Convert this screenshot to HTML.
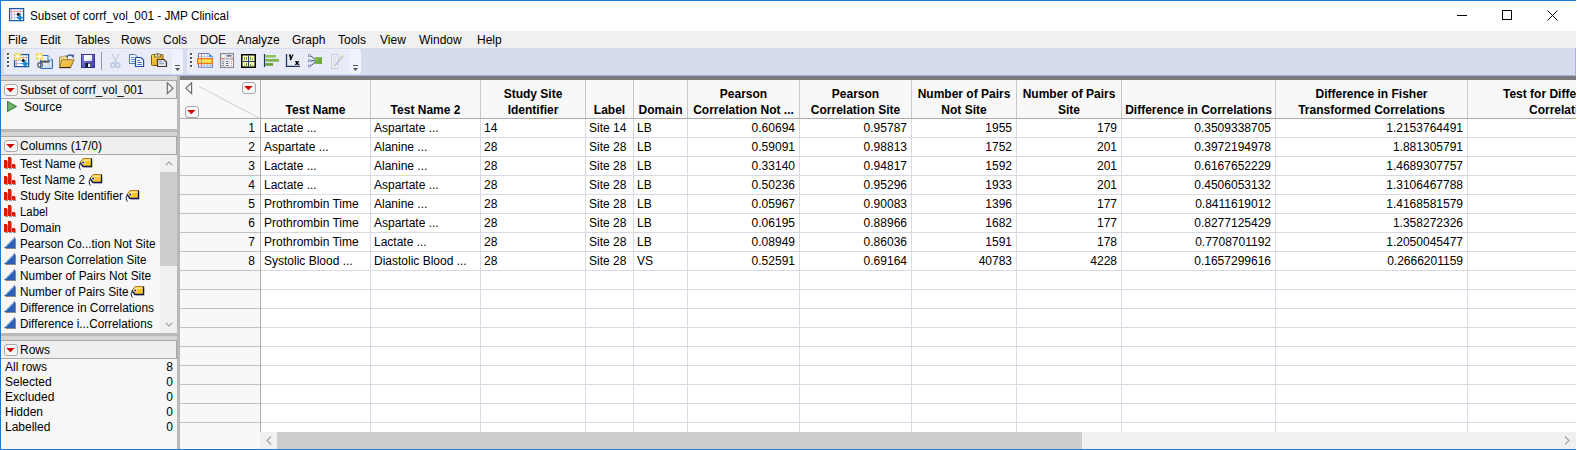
<!DOCTYPE html>
<html><head><meta charset="utf-8"><style>
html,body{margin:0;padding:0;}
body{width:1577px;height:450px;overflow:hidden;position:relative;background:#fff;font-family:"Liberation Sans",sans-serif;font-size:12px;}
body>div,body>svg{position:absolute;}
.t{line-height:14px;white-space:pre;color:#000;}
</style></head><body>
<div style="left:0px;top:0px;width:1576px;height:450px;background:#fff"></div>
<div style="left:1px;top:1px;width:1575px;height:30px;background:#fff"></div>
<div class="t" style="left:30px;top:9px;color:#000;transform:scaleX(0.978);transform-origin:0 0;">Subset of corrf_vol_001 - JMP Clinical</div>
<svg style="left:8px;top:7px" width="18" height="17" viewBox="8 7 18 17"><rect x="9.6" y="8.6" width="14" height="12" fill="#fff" stroke="#1e5aa6" stroke-width="1.3"/><path d="M14.5 9V20M17.5 9V20M20.5 9V20M10 14.5H23M10 17.5H23" stroke="#b8cfea" stroke-width="0.9"/><path d="M10 11.5H23M11.5 9V20" stroke="#f49090" stroke-width="0.9"/><circle cx="18.5" cy="14.3" r="1.6" fill="#111"/><path d="M15.2 17.6Q19.5 17.3 19.9 13.8Q20.3 17.3 25 17.6Q20.3 17.9 19.9 22.8Q19.5 17.9 15.2 17.6Z" fill="#1a86cc"/></svg>
<div style="left:1457px;top:15px;width:10px;height:1px;background:#000"></div>
<div style="left:1502px;top:10px;width:8px;height:8px;border:1px solid #000"></div>
<svg style="left:1547px;top:10px" width="11" height="11" viewBox="0 0 11 11"><path d="M0.5 0.5L10.5 10.5M10.5 0.5L0.5 10.5" stroke="#000" stroke-width="1"/></svg>
<div style="left:1px;top:31px;width:1575px;height:17px;background:#f0f0f0"></div>
<div class="t" style="left:8px;top:33px;color:#000">File</div>
<div class="t" style="left:40px;top:33px;color:#000">Edit</div>
<div class="t" style="left:75px;top:33px;color:#000">Tables</div>
<div class="t" style="left:121px;top:33px;color:#000">Rows</div>
<div class="t" style="left:163px;top:33px;color:#000">Cols</div>
<div class="t" style="left:200px;top:33px;color:#000">DOE</div>
<div class="t" style="left:237px;top:33px;color:#000">Analyze</div>
<div class="t" style="left:292px;top:33px;color:#000">Graph</div>
<div class="t" style="left:338px;top:33px;color:#000">Tools</div>
<div class="t" style="left:380px;top:33px;color:#000">View</div>
<div class="t" style="left:419px;top:33px;color:#000">Window</div>
<div class="t" style="left:477px;top:33px;color:#000">Help</div>
<div style="left:1px;top:48px;width:1575px;height:27px;background:#d6dbee"></div>
<div style="left:1px;top:75px;width:1575px;height:1px;background:#a9b1d6"></div>
<div style="left:1575px;top:48px;width:1px;height:28px;background:#a9b1d6"></div>
<div style="left:4px;top:49px;width:179px;height:25px;background:#e9ecf7;border-radius:3px"></div>
<div style="left:172px;top:49px;width:11px;height:25px;background:#f0f3fb;border-radius:0 3px 3px 0"></div>
<div style="left:187px;top:49px;width:174px;height:25px;background:#e9ecf7;border-radius:3px"></div>
<div style="left:350px;top:49px;width:11px;height:25px;background:#f0f3fb;border-radius:0 3px 3px 0"></div>
<div style="left:8px;top:54px;width:2px;height:2px;background:#fff"></div>
<div style="left:7px;top:53px;width:2px;height:2px;background:#555"></div>
<div style="left:8px;top:58px;width:2px;height:2px;background:#fff"></div>
<div style="left:7px;top:57px;width:2px;height:2px;background:#555"></div>
<div style="left:8px;top:62px;width:2px;height:2px;background:#fff"></div>
<div style="left:7px;top:61px;width:2px;height:2px;background:#555"></div>
<div style="left:8px;top:66px;width:2px;height:2px;background:#fff"></div>
<div style="left:7px;top:65px;width:2px;height:2px;background:#555"></div>
<div style="left:191px;top:54px;width:2px;height:2px;background:#fff"></div>
<div style="left:190px;top:53px;width:2px;height:2px;background:#555"></div>
<div style="left:191px;top:58px;width:2px;height:2px;background:#fff"></div>
<div style="left:190px;top:57px;width:2px;height:2px;background:#555"></div>
<div style="left:191px;top:62px;width:2px;height:2px;background:#fff"></div>
<div style="left:190px;top:61px;width:2px;height:2px;background:#555"></div>
<div style="left:191px;top:66px;width:2px;height:2px;background:#fff"></div>
<div style="left:190px;top:65px;width:2px;height:2px;background:#555"></div>
<div style="left:175px;top:65px;width:5px;height:1px;background:#555"></div>
<svg style="left:175px;top:68px" width="5" height="3" viewBox="0 0 5 3"><path d="M0 0H5L2.5 3Z" fill="#555"/></svg>
<div style="left:353px;top:65px;width:5px;height:1px;background:#555"></div>
<svg style="left:353px;top:68px" width="5" height="3" viewBox="0 0 5 3"><path d="M0 0H5L2.5 3Z" fill="#555"/></svg>
<div style="left:101px;top:52px;width:1px;height:18px;background:#8f97b6"></div>
<svg style="left:13px;top:52px" width="19" height="18" viewBox="13 52 19 18"><rect x="14.6" y="54.6" width="14" height="12" fill="#fff" stroke="#1e5aa6" stroke-width="1.3"/><path d="M23.5 55V66M26.5 55V66M15 60.5H28" stroke="#b4cde8" stroke-width="0.9"/><path d="M21 57.5H28M16.5 60V66" stroke="#f08a8a" stroke-width="0.8"/><path d="M15 63.5H22" stroke="#8aa8d8" stroke-width="0.8"/><circle cx="23.3" cy="60.5" r="1.6" fill="#111"/><path d="M20.5 63.5Q24.6 63.2 25 60Q25.4 63.2 30.5 63.5Q25.4 63.8 25 68.5Q24.6 63.8 20.5 63.5Z" fill="#1a86cc"/><rect x="14" y="53" width="7" height="7" fill="#f3d45a"/><path d="M17.5 53V60M14 56.5H21M14.5 53.5L20.5 59.5M20.5 53.5L14.5 59.5" stroke="#fff6c8" stroke-width="0.9"/><circle cx="17.5" cy="56.5" r="1.4" fill="#fffef0"/></svg>
<svg style="left:35px;top:52px" width="19" height="18" viewBox="35 52 19 18"><defs><linearGradient id="gpg" x1="0" y1="0" x2="1" y2="1"><stop offset="0" stop-color="#ffffff"/><stop offset="1" stop-color="#bcd4f0"/></linearGradient></defs><path d="M40.5 55.5H48L52.5 60V68.5H40.5Z" fill="url(#gpg)" stroke="#2a6cb8" stroke-width="1"/><path d="M48 55.5V60H52.5" fill="#fff" stroke="#2a6cb8" stroke-width="0.9"/><circle cx="40" cy="65" r="2.3" fill="none" stroke="#6a6a6a" stroke-width="1.4"/><path d="M41 61.6H49.5" stroke="#4e4e4e" stroke-width="2"/><rect x="36" y="53" width="7" height="7" fill="#f3d45a"/><path d="M39.5 53V60M36 56.5H43M36.5 53.5L42.5 59.5M42.5 53.5L36.5 59.5" stroke="#fff6c8" stroke-width="0.9"/><circle cx="39.5" cy="56.5" r="1.4" fill="#fffef0"/></svg>
<svg style="left:58px;top:52px" width="18" height="17" viewBox="58 52 18 17"><defs><linearGradient id="gf1" x1="0" y1="0" x2="0" y2="1"><stop offset="0" stop-color="#f8e8a0"/><stop offset="1" stop-color="#e0bc60"/></linearGradient><linearGradient id="gf2" x1="0" y1="0" x2="1" y2="1"><stop offset="0" stop-color="#f8dc70"/><stop offset="1" stop-color="#e8a418"/></linearGradient></defs><path d="M59.5 57H62.5L63.5 56H67.5V67.5H59.5Z" fill="url(#gf1)" stroke="#a08848" stroke-width="0.9"/><path d="M61.8 59.8H74.2L70.6 67.6H59.6Z" fill="url(#gf2)" stroke="#8a6a28" stroke-width="0.9"/><path d="M59.5 67.6H70.6" stroke="#2a2010" stroke-width="1"/><path d="M66.3 57.2Q68.8 53.6 72.4 55.8" fill="none" stroke="#3c5c8c" stroke-width="1.3"/><path d="M70.6 55L74.2 54.6L73.6 58.2Z" fill="#3c5c8c"/></svg>
<svg style="left:80px;top:53px" width="16" height="16" viewBox="80 53 16 16"><defs><linearGradient id="gsv" x1="0" y1="0" x2="1" y2="1"><stop offset="0" stop-color="#8484e4"/><stop offset="1" stop-color="#3c3ca8"/></linearGradient><linearGradient id="glb" x1="0" y1="0" x2="1" y2="1"><stop offset="0" stop-color="#ffffff"/><stop offset="0.6" stop-color="#f4f6ff"/><stop offset="1" stop-color="#c8d0ec"/></linearGradient></defs><rect x="81.5" y="54.5" width="13" height="13" fill="url(#gsv)" stroke="#34349a" stroke-width="1"/><rect x="84" y="55" width="8" height="6" fill="url(#glb)"/><rect x="85.5" y="63" width="5.5" height="4.5" fill="#141414"/><rect x="88" y="63.6" width="2.4" height="3.4" fill="#e8e8e8"/></svg>
<svg style="left:109px;top:53px" width="12" height="16" viewBox="109 53 12 16"><path d="M112.2 54L116.6 63M118.8 54L114.4 63" stroke="#c6d0e2" stroke-width="1.6"/><ellipse cx="112.8" cy="65.2" rx="1.9" ry="2.2" fill="none" stroke="#b6c6e4" stroke-width="1.4"/><ellipse cx="117.9" cy="65.2" rx="1.9" ry="2.2" fill="none" stroke="#b6c6e4" stroke-width="1.4"/></svg>
<svg style="left:128px;top:53px" width="17" height="15" viewBox="128 53 17 15"><path d="M129.5 54.5H135L137.5 57V63.5H129.5Z" fill="#f6f9ff" stroke="#5274b0" stroke-width="1"/><path d="M131 57.5H134M131 59.5H135.5M131 61.5H135.5" stroke="#5a8ad6" stroke-width="0.9"/><path d="M135.5 57.5H141L143.6 60.2V66.5H135.5Z" fill="#f8fbff" stroke="#2448a4" stroke-width="1.2"/><path d="M137.2 60.5H140M137.2 62.5H142M137.2 64.5H142" stroke="#4a7ad4" stroke-width="1"/></svg>
<svg style="left:150px;top:52px" width="18" height="16" viewBox="150 52 18 16"><defs><linearGradient id="gcb" x1="0" y1="0" x2="1" y2="1"><stop offset="0" stop-color="#f8dc58"/><stop offset="1" stop-color="#d89a10"/></linearGradient></defs><rect x="151.5" y="54.5" width="11.5" height="11" rx="1" fill="url(#gcb)" stroke="#7a5a20" stroke-width="1"/><path d="M154.6 57V54.6Q157.6 52.4 160.6 54.6V57Z" fill="#efe6bc" stroke="#6e5e38" stroke-width="0.9"/><circle cx="157.6" cy="55.1" r="0.8" fill="#6e5e38"/><path d="M157.5 59.5H164L166.5 62V66.5H157.5Z" fill="#dde4ef" stroke="#4a3828" stroke-width="1.2"/><path d="M159.2 61.6H162M159.2 63.6H164" stroke="#8898b8" stroke-width="1"/></svg>
<svg style="left:196px;top:52px" width="18" height="17" viewBox="196 52 18 17"><path d="M198.5 53.5H209L212.5 57V67.5H198.5Z" fill="#f6f9fd" stroke="#7078b8" stroke-width="1"/><path d="M209 53.5L212.5 57H209Z" fill="#3a8ad8"/><path d="M204.5 54V67M207.5 54V67M210.5 57V67M199 56.5H209M199 65.5H212M199 67H212" stroke="#a8cce8" stroke-width="0.9"/><rect x="197.7" y="58.7" width="14.6" height="4.8" fill="#f2ee5a" stroke="#f07818" stroke-width="1.4"/><path d="M204.5 59.5V63M207.5 59.5V63M210.5 59.5V63" stroke="#e4d848" stroke-width="0.8"/><path d="M201.5 54V67" stroke="#f06464" stroke-width="0.9"/></svg>
<svg style="left:219px;top:52px" width="16" height="17" viewBox="219 52 16 17"><rect x="220.6" y="53.6" width="12.8" height="13.8" fill="#d6d6d6" stroke="#8c8c8c" stroke-width="1.3"/><rect x="221.5" y="54.5" width="3" height="3" fill="#fafafa"/><rect x="225.5" y="54.5" width="7" height="3" fill="#fafafa"/><path d="M226.6 55.9H231.6" stroke="#283868" stroke-width="1.2"/><path d="M221 58.6H224.5" stroke="#e88a8a" stroke-width="1.2"/><path d="M225.5 58.6H229.5" stroke="#b0b8d8" stroke-width="1.2"/><path d="M230.3 58.6H233" stroke="#e88a8a" stroke-width="1.2"/><rect x="221.5" y="60" width="3" height="6.8" fill="#fafafa"/><rect x="225.4" y="60" width="3.8" height="6.8" fill="#fafafa"/><rect x="230" y="60" width="2.8" height="6.8" fill="#fafafa"/><circle cx="223" cy="61.5" r="0.7" fill="#283868"/><circle cx="223" cy="63.5" r="0.7" fill="#283868"/><circle cx="223" cy="65.5" r="0.7" fill="#283868"/><path d="M226.3 61.5H228.3M226.3 63.5H228.3M226.3 65.5H228.3" stroke="#2a4a6a" stroke-width="1"/><circle cx="231.4" cy="61.5" r="0.6" fill="#e06060"/><circle cx="231.4" cy="63.5" r="0.6" fill="#e06060"/><circle cx="231.4" cy="65.5" r="0.6" fill="#e06060"/></svg>
<svg style="left:240px;top:53px" width="17" height="16" viewBox="240 53 17 16"><rect x="241.75" y="54.75" width="13.5" height="12.5" fill="#f8f6b4" stroke="#050505" stroke-width="1.5"/><path d="M248.5 55.5V67M242.5 61.5H255" stroke="#26406a" stroke-width="1"/><path d="M244.5 57V60M246.5 57V60M250.5 57V60M252.5 58.5V60M244.5 65V66M246.5 63V66M250.5 64V66M252.5 65V66" stroke="#6a9a30" stroke-width="1"/></svg>
<svg style="left:263px;top:53px" width="17" height="15" viewBox="263 53 17 15"><path d="M264.5 54V67" stroke="#1e3468" stroke-width="1.2"/><rect x="265.2" y="55" width="10.8" height="2.6" fill="#8cc45c"/><rect x="265.2" y="59" width="13.8" height="2.7" fill="#7ab44a"/><rect x="265.2" y="63.1" width="7.8" height="2.7" fill="#66a03a"/></svg>
<svg style="left:285px;top:53px" width="16" height="15" viewBox="285 53 16 15"><path d="M286.5 54V66.4H300" fill="none" stroke="#1e3468" stroke-width="1.3"/><path d="M288.8 54.6H290.8L291.4 57.2L292.2 54.6H293.6L291.2 60.2H289.4L290.2 59L288.8 54.6Z" fill="#000"/><path d="M294.8 61H296.8L297.2 62.2L297.8 61H299.4L298.1 62.9L299.6 65H297.6L297.1 63.8L296.4 65H294.8L296.2 62.9Z" fill="#000"/></svg>
<svg style="left:307px;top:53px" width="16" height="15" viewBox="307 53 16 15"><rect x="308.5" y="54.6" width="2" height="2" fill="#eef" stroke="#8090c0" stroke-width="0.8"/><rect x="308.5" y="59.8" width="2" height="2" fill="#eef" stroke="#8090c0" stroke-width="0.8"/><rect x="308.5" y="65" width="2" height="2" fill="#eef" stroke="#8090c0" stroke-width="0.8"/><path d="M311 56L315 59.2M311 60.8H315M311 65.6L315 62.4" stroke="#1e3468" stroke-width="0.9"/><defs><linearGradient id="gft" x1="0" y1="0" x2="1" y2="1"><stop offset="0" stop-color="#84c050"/><stop offset="1" stop-color="#5e9e34"/></linearGradient></defs><rect x="315" y="57.1" width="7" height="6.8" fill="url(#gft)"/></svg>
<svg style="left:330px;top:53px" width="16" height="17" viewBox="330 53 16 17"><rect x="331.5" y="54.5" width="6.5" height="14" fill="#eef1f6" stroke="#c8d0de" stroke-width="1"/><path d="M333 57H336M333 59H336M333 61H336M333 63H335" stroke="#c4ccd8" stroke-width="0.8"/><path d="M333.8 66.6L342.6 56.4" stroke="#c6ccda" stroke-width="2.2"/><path d="M342.2 56.8L343.8 55" stroke="#f0dab0" stroke-width="2.2"/><path d="M333.6 66.8L334.8 65.4" stroke="#f0dab0" stroke-width="1.6"/></svg>
<div style="left:1px;top:76px;width:176px;height:4px;background:#d5d5d5"></div>
<div style="left:177px;top:76px;width:3px;height:4px;background:#b9b9b9"></div>
<div style="left:180px;top:76px;width:1396px;height:4px;background:#7b7b7b"></div>
<div style="left:1px;top:80px;width:176px;height:369px;background:#f7f7f7"></div>
<div style="left:177px;top:80px;width:3px;height:369px;background:#b9b9b9"></div>
<div style="left:1px;top:80px;width:176px;height:19px;background:#efefef;border-top:1px solid #a8a8a8;border-bottom:1px solid #a8a8a8;border-right:1px solid #a8a8a8;box-sizing:border-box"></div>
<div style="left:4px;top:84px;width:13px;height:11px;background:#f7f7f7;border:1px solid #a8a8a8;border-radius:3px;box-sizing:border-box;width:14px;height:12px"></div>
<svg style="left:6px;top:88px" width="9" height="5" viewBox="0 0 9 5"><path d="M0.2 0H8.6L4.4 4.3Z" fill="#d00000"/></svg>
<div class="t" style="left:20px;top:83px;color:#000;transform:scaleX(0.972);transform-origin:0 0;">Subset of corrf_vol_001</div>
<svg style="left:166px;top:82px" width="8" height="13" viewBox="0 0 8 13"><path d="M1.3 0.7V11.6L7 6.15Z" fill="none" stroke="#6e6e6e" stroke-width="1.2"/></svg>
<svg style="left:7px;top:101px" width="10" height="11" viewBox="0 0 10 11"><path d="M0.6 0.6V10.4L9.2 5.5Z" fill="#72b672" stroke="#3a843a" stroke-width="1.1"/></svg>
<div class="t" style="left:24px;top:100px;color:#000">Source</div>
<div style="left:1px;top:129px;width:176px;height:3px;background:#b9b9b9"></div>
<div style="left:1px;top:132px;width:176px;height:4px;background:#d5d5d5"></div>
<div style="left:1px;top:136px;width:176px;height:19px;background:#efefef;border-top:1px solid #a8a8a8;border-bottom:1px solid #a8a8a8;border-right:1px solid #a8a8a8;box-sizing:border-box"></div>
<div style="left:4px;top:140px;width:13px;height:11px;background:#f7f7f7;border:1px solid #a8a8a8;border-radius:3px;box-sizing:border-box;width:14px;height:12px"></div>
<svg style="left:6px;top:144px" width="9" height="5" viewBox="0 0 9 5"><path d="M0.2 0H8.6L4.4 4.3Z" fill="#d00000"/></svg>
<div class="t" style="left:20px;top:139px;color:#000">Columns (17/0)</div>
<svg style="left:4px;top:157px" width="13" height="13" viewBox="0 0 13 13"><rect x="1" y="4" width="3" height="8" fill="#999"/><rect x="5" y="1" width="3" height="11" fill="#999"/><rect x="9" y="8" width="3" height="4" fill="#999"/><rect x="0" y="3" width="3" height="8" fill="#d61f06"/><rect x="4" y="0" width="3" height="11" fill="#d61f06"/><rect x="8" y="7" width="3" height="4" fill="#d61f06"/></svg>
<div class="t" style="left:20px;top:157px;color:#000;transform:scaleX(0.973);transform-origin:0 0;">Test Name</div>
<svg style="left:78px;top:156px" width="15" height="14" viewBox="0 0 15 14"><path d="M6 3.5H14.5V11.5H6Z" fill="#9a9a9a" opacity="0.6"/><path d="M5 2.5H13.5V10.5H5L2 6.5Z" fill="#f7c624"/><path d="M5.5 3.5H13V5H5Z" fill="#fde58a"/><path d="M2 6.5L5 2.5H13.5" fill="none" stroke="#b07a30" stroke-width="1"/><path d="M13.5 2.5V10.5H5L2 6.5" fill="none" stroke="#0e1650" stroke-width="1.3"/><circle cx="5.2" cy="6.5" r="1.7" fill="#fff"/><circle cx="5.2" cy="6.5" r="1" fill="#0e1650"/><path d="M2.5 7Q0.2 9 1.6 12.5L2.8 13.5" fill="none" stroke="#0e1650" stroke-width="1"/></svg>
<svg style="left:4px;top:173px" width="13" height="13" viewBox="0 0 13 13"><rect x="1" y="4" width="3" height="8" fill="#999"/><rect x="5" y="1" width="3" height="11" fill="#999"/><rect x="9" y="8" width="3" height="4" fill="#999"/><rect x="0" y="3" width="3" height="8" fill="#d61f06"/><rect x="4" y="0" width="3" height="11" fill="#d61f06"/><rect x="8" y="7" width="3" height="4" fill="#d61f06"/></svg>
<div class="t" style="left:20px;top:173px;color:#000;transform:scaleX(0.962);transform-origin:0 0;">Test Name 2</div>
<svg style="left:88px;top:172px" width="15" height="14" viewBox="0 0 15 14"><path d="M6 3.5H14.5V11.5H6Z" fill="#9a9a9a" opacity="0.6"/><path d="M5 2.5H13.5V10.5H5L2 6.5Z" fill="#f7c624"/><path d="M5.5 3.5H13V5H5Z" fill="#fde58a"/><path d="M2 6.5L5 2.5H13.5" fill="none" stroke="#b07a30" stroke-width="1"/><path d="M13.5 2.5V10.5H5L2 6.5" fill="none" stroke="#0e1650" stroke-width="1.3"/><circle cx="5.2" cy="6.5" r="1.7" fill="#fff"/><circle cx="5.2" cy="6.5" r="1" fill="#0e1650"/><path d="M2.5 7Q0.2 9 1.6 12.5L2.8 13.5" fill="none" stroke="#0e1650" stroke-width="1"/></svg>
<svg style="left:4px;top:189px" width="13" height="13" viewBox="0 0 13 13"><rect x="1" y="4" width="3" height="8" fill="#999"/><rect x="5" y="1" width="3" height="11" fill="#999"/><rect x="9" y="8" width="3" height="4" fill="#999"/><rect x="0" y="3" width="3" height="8" fill="#d61f06"/><rect x="4" y="0" width="3" height="11" fill="#d61f06"/><rect x="8" y="7" width="3" height="4" fill="#d61f06"/></svg>
<div class="t" style="left:20px;top:189px;color:#000;transform:scaleX(0.99);transform-origin:0 0;">Study Site Identifier</div>
<svg style="left:125px;top:188px" width="15" height="14" viewBox="0 0 15 14"><path d="M6 3.5H14.5V11.5H6Z" fill="#9a9a9a" opacity="0.6"/><path d="M5 2.5H13.5V10.5H5L2 6.5Z" fill="#f7c624"/><path d="M5.5 3.5H13V5H5Z" fill="#fde58a"/><path d="M2 6.5L5 2.5H13.5" fill="none" stroke="#b07a30" stroke-width="1"/><path d="M13.5 2.5V10.5H5L2 6.5" fill="none" stroke="#0e1650" stroke-width="1.3"/><circle cx="5.2" cy="6.5" r="1.7" fill="#fff"/><circle cx="5.2" cy="6.5" r="1" fill="#0e1650"/><path d="M2.5 7Q0.2 9 1.6 12.5L2.8 13.5" fill="none" stroke="#0e1650" stroke-width="1"/></svg>
<svg style="left:4px;top:205px" width="13" height="13" viewBox="0 0 13 13"><rect x="1" y="4" width="3" height="8" fill="#999"/><rect x="5" y="1" width="3" height="11" fill="#999"/><rect x="9" y="8" width="3" height="4" fill="#999"/><rect x="0" y="3" width="3" height="8" fill="#d61f06"/><rect x="4" y="0" width="3" height="11" fill="#d61f06"/><rect x="8" y="7" width="3" height="4" fill="#d61f06"/></svg>
<div class="t" style="left:20px;top:205px;color:#000;transform:scaleX(0.946);transform-origin:0 0;">Label</div>
<svg style="left:4px;top:221px" width="13" height="13" viewBox="0 0 13 13"><rect x="1" y="4" width="3" height="8" fill="#999"/><rect x="5" y="1" width="3" height="11" fill="#999"/><rect x="9" y="8" width="3" height="4" fill="#999"/><rect x="0" y="3" width="3" height="8" fill="#d61f06"/><rect x="4" y="0" width="3" height="11" fill="#d61f06"/><rect x="8" y="7" width="3" height="4" fill="#d61f06"/></svg>
<div class="t" style="left:20px;top:221px;color:#000;transform:scaleX(0.99);transform-origin:0 0;">Domain</div>
<svg style="left:4px;top:237px" width="13" height="12" viewBox="0 0 13 12"><path d="M1 12L12 1V12Z" fill="#8a8a8a"/><path d="M0 11L11 0V11Z" fill="#2c5fb6"/><path d="M1.8 10.2L10.2 1.8" stroke="#6aa8f0" stroke-width="0.9"/></svg>
<div class="t" style="left:20px;top:237px;color:#000;transform:scaleX(0.976);transform-origin:0 0;">Pearson Co...tion Not Site</div>
<svg style="left:4px;top:253px" width="13" height="12" viewBox="0 0 13 12"><path d="M1 12L12 1V12Z" fill="#8a8a8a"/><path d="M0 11L11 0V11Z" fill="#2c5fb6"/><path d="M1.8 10.2L10.2 1.8" stroke="#6aa8f0" stroke-width="0.9"/></svg>
<div class="t" style="left:20px;top:253px;color:#000;transform:scaleX(0.967);transform-origin:0 0;">Pearson Correlation Site</div>
<svg style="left:4px;top:269px" width="13" height="12" viewBox="0 0 13 12"><path d="M1 12L12 1V12Z" fill="#8a8a8a"/><path d="M0 11L11 0V11Z" fill="#2c5fb6"/><path d="M1.8 10.2L10.2 1.8" stroke="#6aa8f0" stroke-width="0.9"/></svg>
<div class="t" style="left:20px;top:269px;color:#000;transform:scaleX(0.988);transform-origin:0 0;">Number of Pairs Not Site</div>
<svg style="left:4px;top:285px" width="13" height="12" viewBox="0 0 13 12"><path d="M1 12L12 1V12Z" fill="#8a8a8a"/><path d="M0 11L11 0V11Z" fill="#2c5fb6"/><path d="M1.8 10.2L10.2 1.8" stroke="#6aa8f0" stroke-width="0.9"/></svg>
<div class="t" style="left:20px;top:285px;color:#000;transform:scaleX(0.98);transform-origin:0 0;">Number of Pairs Site</div>
<svg style="left:130px;top:284px" width="15" height="14" viewBox="0 0 15 14"><path d="M6 3.5H14.5V11.5H6Z" fill="#9a9a9a" opacity="0.6"/><path d="M5 2.5H13.5V10.5H5L2 6.5Z" fill="#f7c624"/><path d="M5.5 3.5H13V5H5Z" fill="#fde58a"/><path d="M2 6.5L5 2.5H13.5" fill="none" stroke="#b07a30" stroke-width="1"/><path d="M13.5 2.5V10.5H5L2 6.5" fill="none" stroke="#0e1650" stroke-width="1.3"/><circle cx="5.2" cy="6.5" r="1.7" fill="#fff"/><circle cx="5.2" cy="6.5" r="1" fill="#0e1650"/><path d="M2.5 7Q0.2 9 1.6 12.5L2.8 13.5" fill="none" stroke="#0e1650" stroke-width="1"/></svg>
<svg style="left:4px;top:301px" width="13" height="12" viewBox="0 0 13 12"><path d="M1 12L12 1V12Z" fill="#8a8a8a"/><path d="M0 11L11 0V11Z" fill="#2c5fb6"/><path d="M1.8 10.2L10.2 1.8" stroke="#6aa8f0" stroke-width="0.9"/></svg>
<div class="t" style="left:20px;top:301px;color:#000;transform:scaleX(0.991);transform-origin:0 0;">Difference in Correlations</div>
<svg style="left:4px;top:317px" width="13" height="12" viewBox="0 0 13 12"><path d="M1 12L12 1V12Z" fill="#8a8a8a"/><path d="M0 11L11 0V11Z" fill="#2c5fb6"/><path d="M1.8 10.2L10.2 1.8" stroke="#6aa8f0" stroke-width="0.9"/></svg>
<div class="t" style="left:20px;top:317px;color:#000;transform:scaleX(0.981);transform-origin:0 0;">Difference i...Correlations</div>
<div style="left:160px;top:155px;width:17px;height:178px;background:#f0f0f0"></div>
<div style="left:160px;top:172px;width:17px;height:94px;background:#cdcdcd"></div>
<svg style="left:165px;top:160px" width="9" height="7" viewBox="0 0 9 7"><path d="M0.8 5.3L4 1.8L7.2 5.3" fill="none" stroke="#a0a0a0" stroke-width="1.1"/></svg>
<svg style="left:165px;top:321px" width="9" height="7" viewBox="0 0 9 7"><path d="M0.8 1.7L4 5.2L7.2 1.7" fill="none" stroke="#a0a0a0" stroke-width="1.1"/></svg>
<div style="left:1px;top:333px;width:176px;height:3px;background:#b9b9b9"></div>
<div style="left:1px;top:336px;width:176px;height:4px;background:#d5d5d5"></div>
<div style="left:1px;top:340px;width:176px;height:19px;background:#efefef;border-top:1px solid #a8a8a8;border-bottom:1px solid #a8a8a8;border-right:1px solid #a8a8a8;box-sizing:border-box"></div>
<div style="left:4px;top:344px;width:13px;height:11px;background:#f7f7f7;border:1px solid #a8a8a8;border-radius:3px;box-sizing:border-box;width:14px;height:12px"></div>
<svg style="left:6px;top:348px" width="9" height="5" viewBox="0 0 9 5"><path d="M0.2 0H8.6L4.4 4.3Z" fill="#d00000"/></svg>
<div class="t" style="left:20px;top:343px;color:#000">Rows</div>
<div class="t" style="left:5px;top:360px;color:#000">All rows</div>
<div class="t" style="right:1404px;top:360px;text-align:right;color:#000">8</div>
<div class="t" style="left:5px;top:375px;color:#000">Selected</div>
<div class="t" style="right:1404px;top:375px;text-align:right;color:#000">0</div>
<div class="t" style="left:5px;top:390px;color:#000">Excluded</div>
<div class="t" style="right:1404px;top:390px;text-align:right;color:#000">0</div>
<div class="t" style="left:5px;top:405px;color:#000">Hidden</div>
<div class="t" style="right:1404px;top:405px;text-align:right;color:#000">0</div>
<div class="t" style="left:5px;top:420px;color:#000">Labelled</div>
<div class="t" style="right:1404px;top:420px;text-align:right;color:#000">0</div>
<div style="left:180px;top:80px;width:1396px;height:369px;background:#f8f8f8"></div>
<div style="left:261px;top:119px;width:1315px;height:313px;background:#fff"></div>
<div style="left:180px;top:118px;width:1396px;height:1px;background:#ababab"></div>
<div style="left:180px;top:137px;width:80px;height:1px;background:#c2c2c2"></div>
<div style="left:261px;top:137px;width:1315px;height:1px;background:#d9d9e3"></div>
<div style="left:180px;top:156px;width:80px;height:1px;background:#c2c2c2"></div>
<div style="left:261px;top:156px;width:1315px;height:1px;background:#d9d9e3"></div>
<div style="left:180px;top:175px;width:80px;height:1px;background:#c2c2c2"></div>
<div style="left:261px;top:175px;width:1315px;height:1px;background:#d9d9e3"></div>
<div style="left:180px;top:194px;width:80px;height:1px;background:#c2c2c2"></div>
<div style="left:261px;top:194px;width:1315px;height:1px;background:#d9d9e3"></div>
<div style="left:180px;top:213px;width:80px;height:1px;background:#c2c2c2"></div>
<div style="left:261px;top:213px;width:1315px;height:1px;background:#d9d9e3"></div>
<div style="left:180px;top:232px;width:80px;height:1px;background:#c2c2c2"></div>
<div style="left:261px;top:232px;width:1315px;height:1px;background:#d9d9e3"></div>
<div style="left:180px;top:251px;width:80px;height:1px;background:#c2c2c2"></div>
<div style="left:261px;top:251px;width:1315px;height:1px;background:#d9d9e3"></div>
<div style="left:180px;top:270px;width:80px;height:1px;background:#c2c2c2"></div>
<div style="left:261px;top:270px;width:1315px;height:1px;background:#d9d9e3"></div>
<div style="left:180px;top:289px;width:80px;height:1px;background:#c2c2c2"></div>
<div style="left:261px;top:289px;width:1315px;height:1px;background:#d9d9e3"></div>
<div style="left:180px;top:308px;width:80px;height:1px;background:#c2c2c2"></div>
<div style="left:261px;top:308px;width:1315px;height:1px;background:#d9d9e3"></div>
<div style="left:180px;top:327px;width:80px;height:1px;background:#c2c2c2"></div>
<div style="left:261px;top:327px;width:1315px;height:1px;background:#d9d9e3"></div>
<div style="left:180px;top:346px;width:80px;height:1px;background:#c2c2c2"></div>
<div style="left:261px;top:346px;width:1315px;height:1px;background:#d9d9e3"></div>
<div style="left:180px;top:365px;width:80px;height:1px;background:#c2c2c2"></div>
<div style="left:261px;top:365px;width:1315px;height:1px;background:#d9d9e3"></div>
<div style="left:180px;top:384px;width:80px;height:1px;background:#c2c2c2"></div>
<div style="left:261px;top:384px;width:1315px;height:1px;background:#d9d9e3"></div>
<div style="left:180px;top:403px;width:80px;height:1px;background:#c2c2c2"></div>
<div style="left:261px;top:403px;width:1315px;height:1px;background:#d9d9e3"></div>
<div style="left:180px;top:422px;width:80px;height:1px;background:#c2c2c2"></div>
<div style="left:261px;top:422px;width:1315px;height:1px;background:#d9d9e3"></div>
<div style="left:260px;top:80px;width:1px;height:352px;background:#b0b0b0"></div>
<div style="left:370px;top:80px;width:1px;height:38px;background:#c8c8c8"></div>
<div style="left:370px;top:119px;width:1px;height:313px;background:#d9d9e3"></div>
<div style="left:480px;top:80px;width:1px;height:38px;background:#c8c8c8"></div>
<div style="left:480px;top:119px;width:1px;height:313px;background:#d9d9e3"></div>
<div style="left:585px;top:80px;width:1px;height:38px;background:#c8c8c8"></div>
<div style="left:585px;top:119px;width:1px;height:313px;background:#d9d9e3"></div>
<div style="left:633px;top:80px;width:1px;height:38px;background:#c8c8c8"></div>
<div style="left:633px;top:119px;width:1px;height:313px;background:#d9d9e3"></div>
<div style="left:687px;top:80px;width:1px;height:38px;background:#c8c8c8"></div>
<div style="left:687px;top:119px;width:1px;height:313px;background:#d9d9e3"></div>
<div style="left:799px;top:80px;width:1px;height:38px;background:#c8c8c8"></div>
<div style="left:799px;top:119px;width:1px;height:313px;background:#d9d9e3"></div>
<div style="left:911px;top:80px;width:1px;height:38px;background:#c8c8c8"></div>
<div style="left:911px;top:119px;width:1px;height:313px;background:#d9d9e3"></div>
<div style="left:1016px;top:80px;width:1px;height:38px;background:#c8c8c8"></div>
<div style="left:1016px;top:119px;width:1px;height:313px;background:#d9d9e3"></div>
<div style="left:1121px;top:80px;width:1px;height:38px;background:#c8c8c8"></div>
<div style="left:1121px;top:119px;width:1px;height:313px;background:#d9d9e3"></div>
<div style="left:1275px;top:80px;width:1px;height:38px;background:#c8c8c8"></div>
<div style="left:1275px;top:119px;width:1px;height:313px;background:#d9d9e3"></div>
<div style="left:1467px;top:80px;width:1px;height:38px;background:#c8c8c8"></div>
<div style="left:1467px;top:119px;width:1px;height:313px;background:#d9d9e3"></div>
<svg style="left:185px;top:82px" width="8" height="13" viewBox="0 0 8 13"><path d="M6.6 0.7V11.6L0.9 6.15Z" fill="none" stroke="#6e6e6e" stroke-width="1.2"/></svg>
<svg style="left:199px;top:86px" width="62" height="33" viewBox="0 0 62 33"><path d="M0 0.5L61 32.5" stroke="#cdcddc" stroke-width="1"/></svg>
<div style="left:242px;top:82px;width:13px;height:11px;background:#f7f7f7;border:1px solid #a8a8a8;border-radius:3px;box-sizing:border-box;width:14px;height:12px"></div>
<svg style="left:244px;top:86px" width="9" height="5" viewBox="0 0 9 5"><path d="M0.2 0H8.6L4.4 4.3Z" fill="#d00000"/></svg>
<div style="left:185px;top:106px;width:13px;height:11px;background:#f7f7f7;border:1px solid #a8a8a8;border-radius:3px;box-sizing:border-box;width:14px;height:12px"></div>
<svg style="left:187px;top:110px" width="9" height="5" viewBox="0 0 9 5"><path d="M0.2 0H8.6L4.4 4.3Z" fill="#d00000"/></svg>
<div class="t" style="left:115.5px;width:400px;top:103px;text-align:center;font-weight:bold;color:#000">Test Name</div>
<div class="t" style="left:225.5px;width:400px;top:103px;text-align:center;font-weight:bold;color:#000">Test Name 2</div>
<div class="t" style="left:333.0px;width:400px;top:87px;text-align:center;font-weight:bold;color:#000">Study Site</div>
<div class="t" style="left:333.0px;width:400px;top:103px;text-align:center;font-weight:bold;color:#000">Identifier</div>
<div class="t" style="left:409.5px;width:400px;top:103px;text-align:center;font-weight:bold;color:#000">Label</div>
<div class="t" style="left:460.5px;width:400px;top:103px;text-align:center;font-weight:bold;color:#000">Domain</div>
<div class="t" style="left:543.5px;width:400px;top:87px;text-align:center;font-weight:bold;color:#000">Pearson</div>
<div class="t" style="left:543.5px;width:400px;top:103px;text-align:center;font-weight:bold;color:#000">Correlation Not ...</div>
<div class="t" style="left:655.5px;width:400px;top:87px;text-align:center;font-weight:bold;color:#000">Pearson</div>
<div class="t" style="left:655.5px;width:400px;top:103px;text-align:center;font-weight:bold;color:#000">Correlation Site</div>
<div class="t" style="left:764.0px;width:400px;top:87px;text-align:center;font-weight:bold;color:#000">Number of Pairs</div>
<div class="t" style="left:764.0px;width:400px;top:103px;text-align:center;font-weight:bold;color:#000">Not Site</div>
<div class="t" style="left:869.0px;width:400px;top:87px;text-align:center;font-weight:bold;color:#000">Number of Pairs</div>
<div class="t" style="left:869.0px;width:400px;top:103px;text-align:center;font-weight:bold;color:#000">Site</div>
<div class="t" style="left:998.5px;width:400px;top:103px;text-align:center;font-weight:bold;color:#000">Difference in Correlations</div>
<div class="t" style="left:1171.5px;width:400px;top:87px;text-align:center;font-weight:bold;color:#000">Difference in Fisher</div>
<div class="t" style="left:1171.5px;width:400px;top:103px;text-align:center;font-weight:bold;color:#000">Transformed Correlations</div>
<div class="t" style="left:1503px;top:87px;font-weight:bold;color:#000">Test for Difference in</div>
<div class="t" style="left:1529px;top:103px;font-weight:bold;color:#000">Correlations</div>
<div class="t" style="right:1322px;top:121px;text-align:right;color:#000">1</div>
<div class="t" style="left:264px;top:121px;color:#000">Lactate ...</div>
<div class="t" style="left:374px;top:121px;color:#000">Aspartate ...</div>
<div class="t" style="left:484px;top:121px;color:#000">14</div>
<div class="t" style="left:589px;top:121px;color:#000">Site 14</div>
<div class="t" style="left:637px;top:121px;color:#000">LB</div>
<div class="t" style="right:782px;top:121px;text-align:right;color:#000">0.60694</div>
<div class="t" style="right:670px;top:121px;text-align:right;color:#000">0.95787</div>
<div class="t" style="right:565px;top:121px;text-align:right;color:#000">1955</div>
<div class="t" style="right:460px;top:121px;text-align:right;color:#000">179</div>
<div class="t" style="right:306px;top:121px;text-align:right;color:#000">0.3509338705</div>
<div class="t" style="right:114px;top:121px;text-align:right;color:#000">1.2153764491</div>
<div class="t" style="right:1322px;top:140px;text-align:right;color:#000">2</div>
<div class="t" style="left:264px;top:140px;color:#000">Aspartate ...</div>
<div class="t" style="left:374px;top:140px;color:#000">Alanine ...</div>
<div class="t" style="left:484px;top:140px;color:#000">28</div>
<div class="t" style="left:589px;top:140px;color:#000">Site 28</div>
<div class="t" style="left:637px;top:140px;color:#000">LB</div>
<div class="t" style="right:782px;top:140px;text-align:right;color:#000">0.59091</div>
<div class="t" style="right:670px;top:140px;text-align:right;color:#000">0.98813</div>
<div class="t" style="right:565px;top:140px;text-align:right;color:#000">1752</div>
<div class="t" style="right:460px;top:140px;text-align:right;color:#000">201</div>
<div class="t" style="right:306px;top:140px;text-align:right;color:#000">0.3972194978</div>
<div class="t" style="right:114px;top:140px;text-align:right;color:#000">1.881305791</div>
<div class="t" style="right:1322px;top:159px;text-align:right;color:#000">3</div>
<div class="t" style="left:264px;top:159px;color:#000">Lactate ...</div>
<div class="t" style="left:374px;top:159px;color:#000">Alanine ...</div>
<div class="t" style="left:484px;top:159px;color:#000">28</div>
<div class="t" style="left:589px;top:159px;color:#000">Site 28</div>
<div class="t" style="left:637px;top:159px;color:#000">LB</div>
<div class="t" style="right:782px;top:159px;text-align:right;color:#000">0.33140</div>
<div class="t" style="right:670px;top:159px;text-align:right;color:#000">0.94817</div>
<div class="t" style="right:565px;top:159px;text-align:right;color:#000">1592</div>
<div class="t" style="right:460px;top:159px;text-align:right;color:#000">201</div>
<div class="t" style="right:306px;top:159px;text-align:right;color:#000">0.6167652229</div>
<div class="t" style="right:114px;top:159px;text-align:right;color:#000">1.4689307757</div>
<div class="t" style="right:1322px;top:178px;text-align:right;color:#000">4</div>
<div class="t" style="left:264px;top:178px;color:#000">Lactate ...</div>
<div class="t" style="left:374px;top:178px;color:#000">Aspartate ...</div>
<div class="t" style="left:484px;top:178px;color:#000">28</div>
<div class="t" style="left:589px;top:178px;color:#000">Site 28</div>
<div class="t" style="left:637px;top:178px;color:#000">LB</div>
<div class="t" style="right:782px;top:178px;text-align:right;color:#000">0.50236</div>
<div class="t" style="right:670px;top:178px;text-align:right;color:#000">0.95296</div>
<div class="t" style="right:565px;top:178px;text-align:right;color:#000">1933</div>
<div class="t" style="right:460px;top:178px;text-align:right;color:#000">201</div>
<div class="t" style="right:306px;top:178px;text-align:right;color:#000">0.4506053132</div>
<div class="t" style="right:114px;top:178px;text-align:right;color:#000">1.3106467788</div>
<div class="t" style="right:1322px;top:197px;text-align:right;color:#000">5</div>
<div class="t" style="left:264px;top:197px;color:#000">Prothrombin Time</div>
<div class="t" style="left:374px;top:197px;color:#000">Alanine ...</div>
<div class="t" style="left:484px;top:197px;color:#000">28</div>
<div class="t" style="left:589px;top:197px;color:#000">Site 28</div>
<div class="t" style="left:637px;top:197px;color:#000">LB</div>
<div class="t" style="right:782px;top:197px;text-align:right;color:#000">0.05967</div>
<div class="t" style="right:670px;top:197px;text-align:right;color:#000">0.90083</div>
<div class="t" style="right:565px;top:197px;text-align:right;color:#000">1396</div>
<div class="t" style="right:460px;top:197px;text-align:right;color:#000">177</div>
<div class="t" style="right:306px;top:197px;text-align:right;color:#000">0.8411619012</div>
<div class="t" style="right:114px;top:197px;text-align:right;color:#000">1.4168581579</div>
<div class="t" style="right:1322px;top:216px;text-align:right;color:#000">6</div>
<div class="t" style="left:264px;top:216px;color:#000">Prothrombin Time</div>
<div class="t" style="left:374px;top:216px;color:#000">Aspartate ...</div>
<div class="t" style="left:484px;top:216px;color:#000">28</div>
<div class="t" style="left:589px;top:216px;color:#000">Site 28</div>
<div class="t" style="left:637px;top:216px;color:#000">LB</div>
<div class="t" style="right:782px;top:216px;text-align:right;color:#000">0.06195</div>
<div class="t" style="right:670px;top:216px;text-align:right;color:#000">0.88966</div>
<div class="t" style="right:565px;top:216px;text-align:right;color:#000">1682</div>
<div class="t" style="right:460px;top:216px;text-align:right;color:#000">177</div>
<div class="t" style="right:306px;top:216px;text-align:right;color:#000">0.8277125429</div>
<div class="t" style="right:114px;top:216px;text-align:right;color:#000">1.358272326</div>
<div class="t" style="right:1322px;top:235px;text-align:right;color:#000">7</div>
<div class="t" style="left:264px;top:235px;color:#000">Prothrombin Time</div>
<div class="t" style="left:374px;top:235px;color:#000">Lactate ...</div>
<div class="t" style="left:484px;top:235px;color:#000">28</div>
<div class="t" style="left:589px;top:235px;color:#000">Site 28</div>
<div class="t" style="left:637px;top:235px;color:#000">LB</div>
<div class="t" style="right:782px;top:235px;text-align:right;color:#000">0.08949</div>
<div class="t" style="right:670px;top:235px;text-align:right;color:#000">0.86036</div>
<div class="t" style="right:565px;top:235px;text-align:right;color:#000">1591</div>
<div class="t" style="right:460px;top:235px;text-align:right;color:#000">178</div>
<div class="t" style="right:306px;top:235px;text-align:right;color:#000">0.7708701192</div>
<div class="t" style="right:114px;top:235px;text-align:right;color:#000">1.2050045477</div>
<div class="t" style="right:1322px;top:254px;text-align:right;color:#000">8</div>
<div class="t" style="left:264px;top:254px;color:#000">Systolic Blood ...</div>
<div class="t" style="left:374px;top:254px;color:#000">Diastolic Blood ...</div>
<div class="t" style="left:484px;top:254px;color:#000">28</div>
<div class="t" style="left:589px;top:254px;color:#000">Site 28</div>
<div class="t" style="left:637px;top:254px;color:#000">VS</div>
<div class="t" style="right:782px;top:254px;text-align:right;color:#000">0.52591</div>
<div class="t" style="right:670px;top:254px;text-align:right;color:#000">0.69164</div>
<div class="t" style="right:565px;top:254px;text-align:right;color:#000">40783</div>
<div class="t" style="right:460px;top:254px;text-align:right;color:#000">4228</div>
<div class="t" style="right:306px;top:254px;text-align:right;color:#000">0.1657299616</div>
<div class="t" style="right:114px;top:254px;text-align:right;color:#000">0.2666201159</div>
<div style="left:260px;top:432px;width:1316px;height:17px;background:#f0f0f0"></div>
<div style="left:277px;top:432px;width:805px;height:17px;background:#cdcdcd"></div>
<svg style="left:266px;top:436px" width="6" height="9" viewBox="0 0 6 9"><path d="M5 0.5L1 4.5L5 8.5" fill="none" stroke="#a0a0a0" stroke-width="1.1"/></svg>
<svg style="left:1564px;top:436px" width="6" height="9" viewBox="0 0 6 9"><path d="M1 0.5L5 4.5L1 8.5" fill="none" stroke="#a0a0a0" stroke-width="1.1"/></svg>
<div style="left:0px;top:0px;width:1576px;height:1px;background:#1a7ad6"></div>
<div style="left:0px;top:0px;width:1px;height:450px;background:#1a7ad6"></div>
<div style="left:0px;top:449px;width:1576px;height:1px;background:#1a7ad6"></div>
<div style="left:1576px;top:0px;width:1px;height:450px;background:#fff"></div>
</body></html>
